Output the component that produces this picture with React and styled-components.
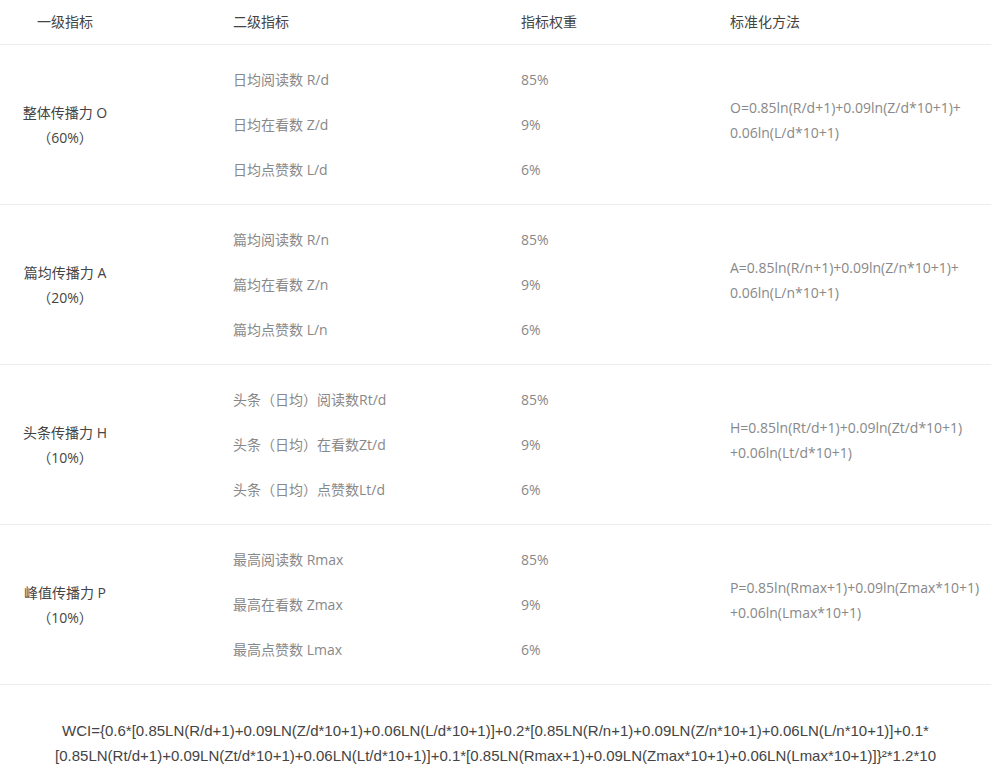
import styled, { createGlobalStyle } from 'styled-components';

const GlobalStyle = createGlobalStyle`
  html, body {
    margin: 0;
    padding: 0;
    background: #fff;
  }
  body {
    font-family: "Open Sans", "Noto Sans CJK SC", sans-serif;
    font-size: 14px;
    color: #333;
  }
`;

const Page = styled.div`
  width: 991px;
  height: 782px;
  overflow: hidden;
  background: #fff;
`;

const Row = styled.div`
  display: grid;
  grid-template-columns: 233px 288px 209px minmax(0, 1fr);
  align-items: center;
  height: ${(p) => p.$height}px;
  border-bottom: 1px solid #ececec;
  box-sizing: border-box;
`;

const HeadCell = styled.div`
  color: #444;
  line-height: 20px;
  ${(p) => p.$center && 'width: 130px; text-align: center;'}
`;

const MainCell = styled.div`
  width: 130px;
  text-align: center;
  color: #444;
  line-height: 25px;
`;

const SubList = styled.div`
  display: flex;
  flex-direction: column;
  gap: 25px;
  color: #888;
  line-height: 20px;
`;

const Formula = styled.div`
  display: flex;
  flex-direction: column;
  color: #888;
  line-height: 25px;
  white-space: nowrap;
  padding-bottom: 9px;
`;

const Total = styled.div`
  padding-top: 33px;
  text-align: center;
  font-family: "Liberation Sans", "Noto Sans CJK SC", sans-serif;
  font-size: 15px;
  line-height: 25px;
  color: #444;
  white-space: nowrap;
`;

const groups = [
  {
    name: '整体传播力 O',
    share: '（60%）',
    items: ['日均阅读数 R/d', '日均在看数 Z/d', '日均点赞数 L/d'],
    formula: ['O=0.85ln(R/d+1)+0.09ln(Z/d*10+1)+', '0.06ln(L/d*10+1)'],
  },
  {
    name: '篇均传播力 A',
    share: '（20%）',
    items: ['篇均阅读数 R/n', '篇均在看数 Z/n', '篇均点赞数 L/n'],
    formula: ['A=0.85ln(R/n+1)+0.09ln(Z/n*10+1)+', '0.06ln(L/n*10+1)'],
  },
  {
    name: '头条传播力 H',
    share: '（10%）',
    items: ['头条（日均）阅读数Rt/d', '头条（日均）在看数Zt/d', '头条（日均）点赞数Lt/d'],
    formula: ['H=0.85ln(Rt/d+1)+0.09ln(Zt/d*10+1)', '+0.06ln(Lt/d*10+1)'],
  },
  {
    name: '峰值传播力 P',
    share: '（10%）',
    items: ['最高阅读数 Rmax', '最高在看数 Zmax', '最高点赞数 Lmax'],
    formula: ['P=0.85ln(Rmax+1)+0.09ln(Zmax*10+1)', '+0.06ln(Lmax*10+1)'],
  },
];

const weights = ['85%', '9%', '6%'];

export default function App() {
  return (
    <Page>
      <GlobalStyle />
      <Row $height={45}>
        <HeadCell $center>一级指标</HeadCell>
        <HeadCell>二级指标</HeadCell>
        <HeadCell>指标权重</HeadCell>
        <HeadCell>标准化方法</HeadCell>
      </Row>
      {groups.map((g) => (
        <Row key={g.name} $height={160}>
          <MainCell>
            {g.name}
            <br />
            {g.share}
          </MainCell>
          <SubList>
            {g.items.map((it) => (
              <span key={it}>{it}</span>
            ))}
          </SubList>
          <SubList>
            {weights.map((w) => (
              <span key={w}>{w}</span>
            ))}
          </SubList>
          <Formula>
            {g.formula.map((line) => (
              <span key={line}>{line}</span>
            ))}
          </Formula>
        </Row>
      ))}
      <Total>
        WCI={'{'}0.6*[0.85LN(R/d+1)+0.09LN(Z/d*10+1)+0.06LN(L/d*10+1)]+0.2*[0.85LN(R/n+1)+0.09LN(Z/n*10+1)+0.06LN(L/n*10+1)]+0.1*
        <br />
        [0.85LN(Rt/d+1)+0.09LN(Zt/d*10+1)+0.06LN(Lt/d*10+1)]+0.1*[0.85LN(Rmax+1)+0.09LN(Zmax*10+1)+0.06LN(Lmax*10+1)]{'}'}²*1.2*10
      </Total>
    </Page>
  );
}
